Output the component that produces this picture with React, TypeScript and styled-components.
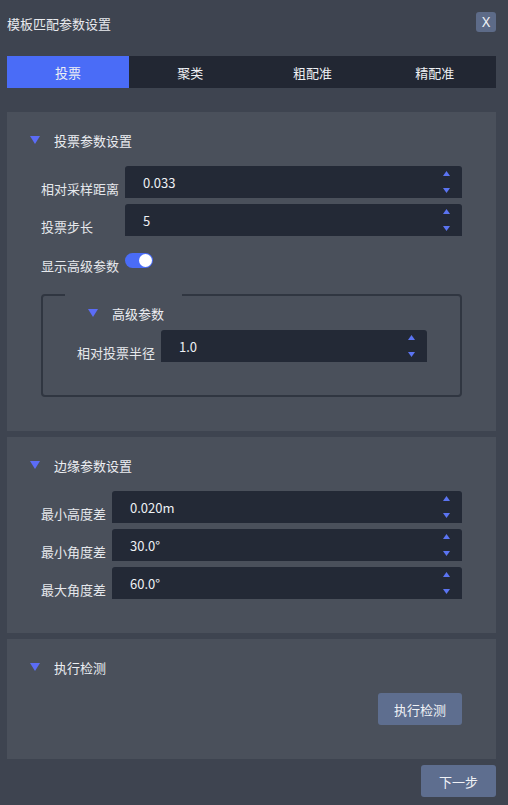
import React from 'react';
import styled, {createGlobalStyle} from "styled-components";

const GlobalStyle = createGlobalStyle`
    html, body {
        margin: 0;
        padding: 0;
        background: #3e4450;
    }
    body {
        font-family: "Noto Sans CJK SC", "Noto Sans", sans-serif;
        font-size: 13px;
        color: #e6e8ec;
    }
`

const tabs = ["投票", "聚类", "粗配准", "精配准"];

const Caret = () => (
    <svg width="10" height="8" viewBox="0 0 10 8">
        <polygon points="0,0 10,0 5,8" fill="#5b6cf6"/>
    </svg>
);

const NumberField = ({value}: { value: string }) => (
    <InputBox>
        <Value>{value}</Value>
        <Spinner>
            <svg width="7" height="5" viewBox="0 0 7 5">
                <polygon points="3.5,0 7,5 0,5" fill="#5b74f2"/>
            </svg>
            <svg width="7" height="5" viewBox="0 0 7 5">
                <polygon points="0,0 7,0 3.5,5" fill="#5b74f2"/>
            </svg>
        </Spinner>
    </InputBox>
);

const App = () => {
    return (
        <Page>
            <GlobalStyle/>
            <TitleBar>
                <Title>模板匹配参数设置</Title>
                <CloseButton>X</CloseButton>
            </TitleBar>

            <TabBar>
                {tabs.map((t, i) => (
                    <Tab key={t} active={i === 0}>{t}</Tab>
                ))}
            </TabBar>

            <Panels>
                <Panel>
                    <SectionHeader indent={-11}>
                        <Caret/>
                        <span>投票参数设置</span>
                    </SectionHeader>
                    <Form>
                        <Label>相对采样距离</Label>
                        <NumberField value="0.033"/>
                        <Label>投票步长</Label>
                        <NumberField value="5"/>
                        <ToggleLabel>显示高级参数</ToggleLabel>
                        <Toggle><span/></Toggle>
                    </Form>
                    <Group>
                        <legend/>
                        <GroupBody>
                            <SectionHeader indent={11} compact>
                                <Caret/>
                                <span>高级参数</span>
                            </SectionHeader>
                            <Form>
                                <Label>相对投票半径</Label>
                                <NumberField value="1.0"/>
                            </Form>
                        </GroupBody>
                    </Group>
                </Panel>

                <Panel>
                    <SectionHeader indent={-11}>
                        <Caret/>
                        <span>边缘参数设置</span>
                    </SectionHeader>
                    <Form>
                        <Label>最小高度差</Label>
                        <NumberField value="0.020m"/>
                        <Label>最小角度差</Label>
                        <NumberField value="30.0°"/>
                        <Label>最大角度差</Label>
                        <NumberField value="60.0°"/>
                    </Form>
                </Panel>

                <Panel>
                    <SectionHeader indent={-11}>
                        <Caret/>
                        <span>执行检测</span>
                    </SectionHeader>
                    <Actions>
                        <Button>执行检测</Button>
                    </Actions>
                </Panel>
            </Panels>

            <Footer>
                <Button wide>下一步</Button>
            </Footer>
        </Page>
    );
};

export default App;

const Page = styled.div`
    width: 508px;
    height: 805px;
    box-sizing: border-box;
    padding: 12px 12px 0 7px;
`

const TitleBar = styled.div`
    display: flex;
    align-items: center;
    justify-content: space-between;
    height: 20px;
`

const Title = styled.span`
    font-size: 13px;
    color: #e8eaee;
    margin-top: 2px;
`

const CloseButton = styled.button`
    width: 20px;
    height: 20px;
    padding: 0;
    border: none;
    border-radius: 3px;
    background: #5d6b88;
    color: #f0f2f6;
    font-family: "Noto Sans", sans-serif;
    font-size: 14px;
    line-height: 20px;
`

const TabBar = styled.div`
    display: grid;
    grid-template-columns: repeat(4, 1fr);
    margin-top: 24px;
    height: 32px;
    background: #222733;
`

const Tab = styled.div<{ active?: boolean }>`
    display: flex;
    align-items: center;
    justify-content: center;
    font-size: 13px;
    color: #eef0f4;
    background: ${props => props.active ? "#4a6cf7" : "transparent"};
`

const Panels = styled.div`
    display: flex;
    flex-direction: column;
    gap: 6px;
    margin-top: 24px;
`

const Panel = styled.section`
    background: #4a505b;
    padding: 18px 34px 34px;
`

const SectionHeader = styled.div<{ indent: number, compact?: boolean }>`
    display: flex;
    align-items: center;
    gap: 14px;
    height: 20px;
    margin-left: ${props => props.indent}px;
    margin-bottom: ${props => props.compact ? 7 : 16}px;
    font-size: 13px;
    color: #eceef2;
`

const Form = styled.div`
    display: grid;
    grid-template-columns: auto 1fr;
    column-gap: 6px;
    row-gap: 6px;
    align-items: end;
`

const Label = styled.label`
    font-size: 13px;
    line-height: 16px;
    padding-bottom: 1px;
    color: #e6e8ec;
    white-space: nowrap;
`

const ToggleLabel = styled(Label)`
    align-self: start;
    margin-top: 11px;
    padding-top: 5px;
`

const Toggle = styled.div`
    align-self: start;
    margin-top: 11px;
    width: 28px;
    height: 15px;
    border-radius: 8px;
    background: #4a6cf7;
    display: flex;
    align-items: center;
    justify-content: flex-end;
    padding: 0 1px;
    box-sizing: border-box;

    span {
        width: 13px;
        height: 13px;
        border-radius: 50%;
        background: #ffffff;
    }
`

const InputBox = styled.div`
    display: flex;
    align-items: stretch;
    height: 32px;
    background: #232936;
    border-radius: 3px 3px 0 0;
    padding-left: 18px;
`

const Value = styled.span`
    flex: 1;
    align-self: center;
    font-size: 13px;
    color: #eef0f4;
`

const Spinner = styled.div`
    display: flex;
    flex-direction: column;
    justify-content: space-between;
    padding: 5px 0;
    margin-right: 12px;

    svg {
        display: block;
    }
`

const Group = styled.fieldset`
    margin: 19px 0 0;
    padding: 0;
    min-width: 0;
    border: 2px solid #303641;
    border-radius: 4px;

    legend {
        width: 117px;
        height: 0;
        padding: 0;
        margin-left: 22px;
    }
`

const GroupBody = styled.div`
    padding: 7px 33px 33px 34px;
`

const Actions = styled.div`
    display: flex;
    justify-content: flex-end;
`

const Button = styled.button<{ wide?: boolean }>`
    height: 32px;
    padding: 0 ${props => props.wide ? 18 : 16}px;
    border: none;
    border-radius: 3px;
    background: #5e6e8f;
    color: #f0f2f6;
    font-family: "Noto Sans CJK SC", "Noto Sans", sans-serif;
    font-size: 13px;
`

const Footer = styled.div`
    display: flex;
    justify-content: flex-end;
    margin-top: 6px;
`
